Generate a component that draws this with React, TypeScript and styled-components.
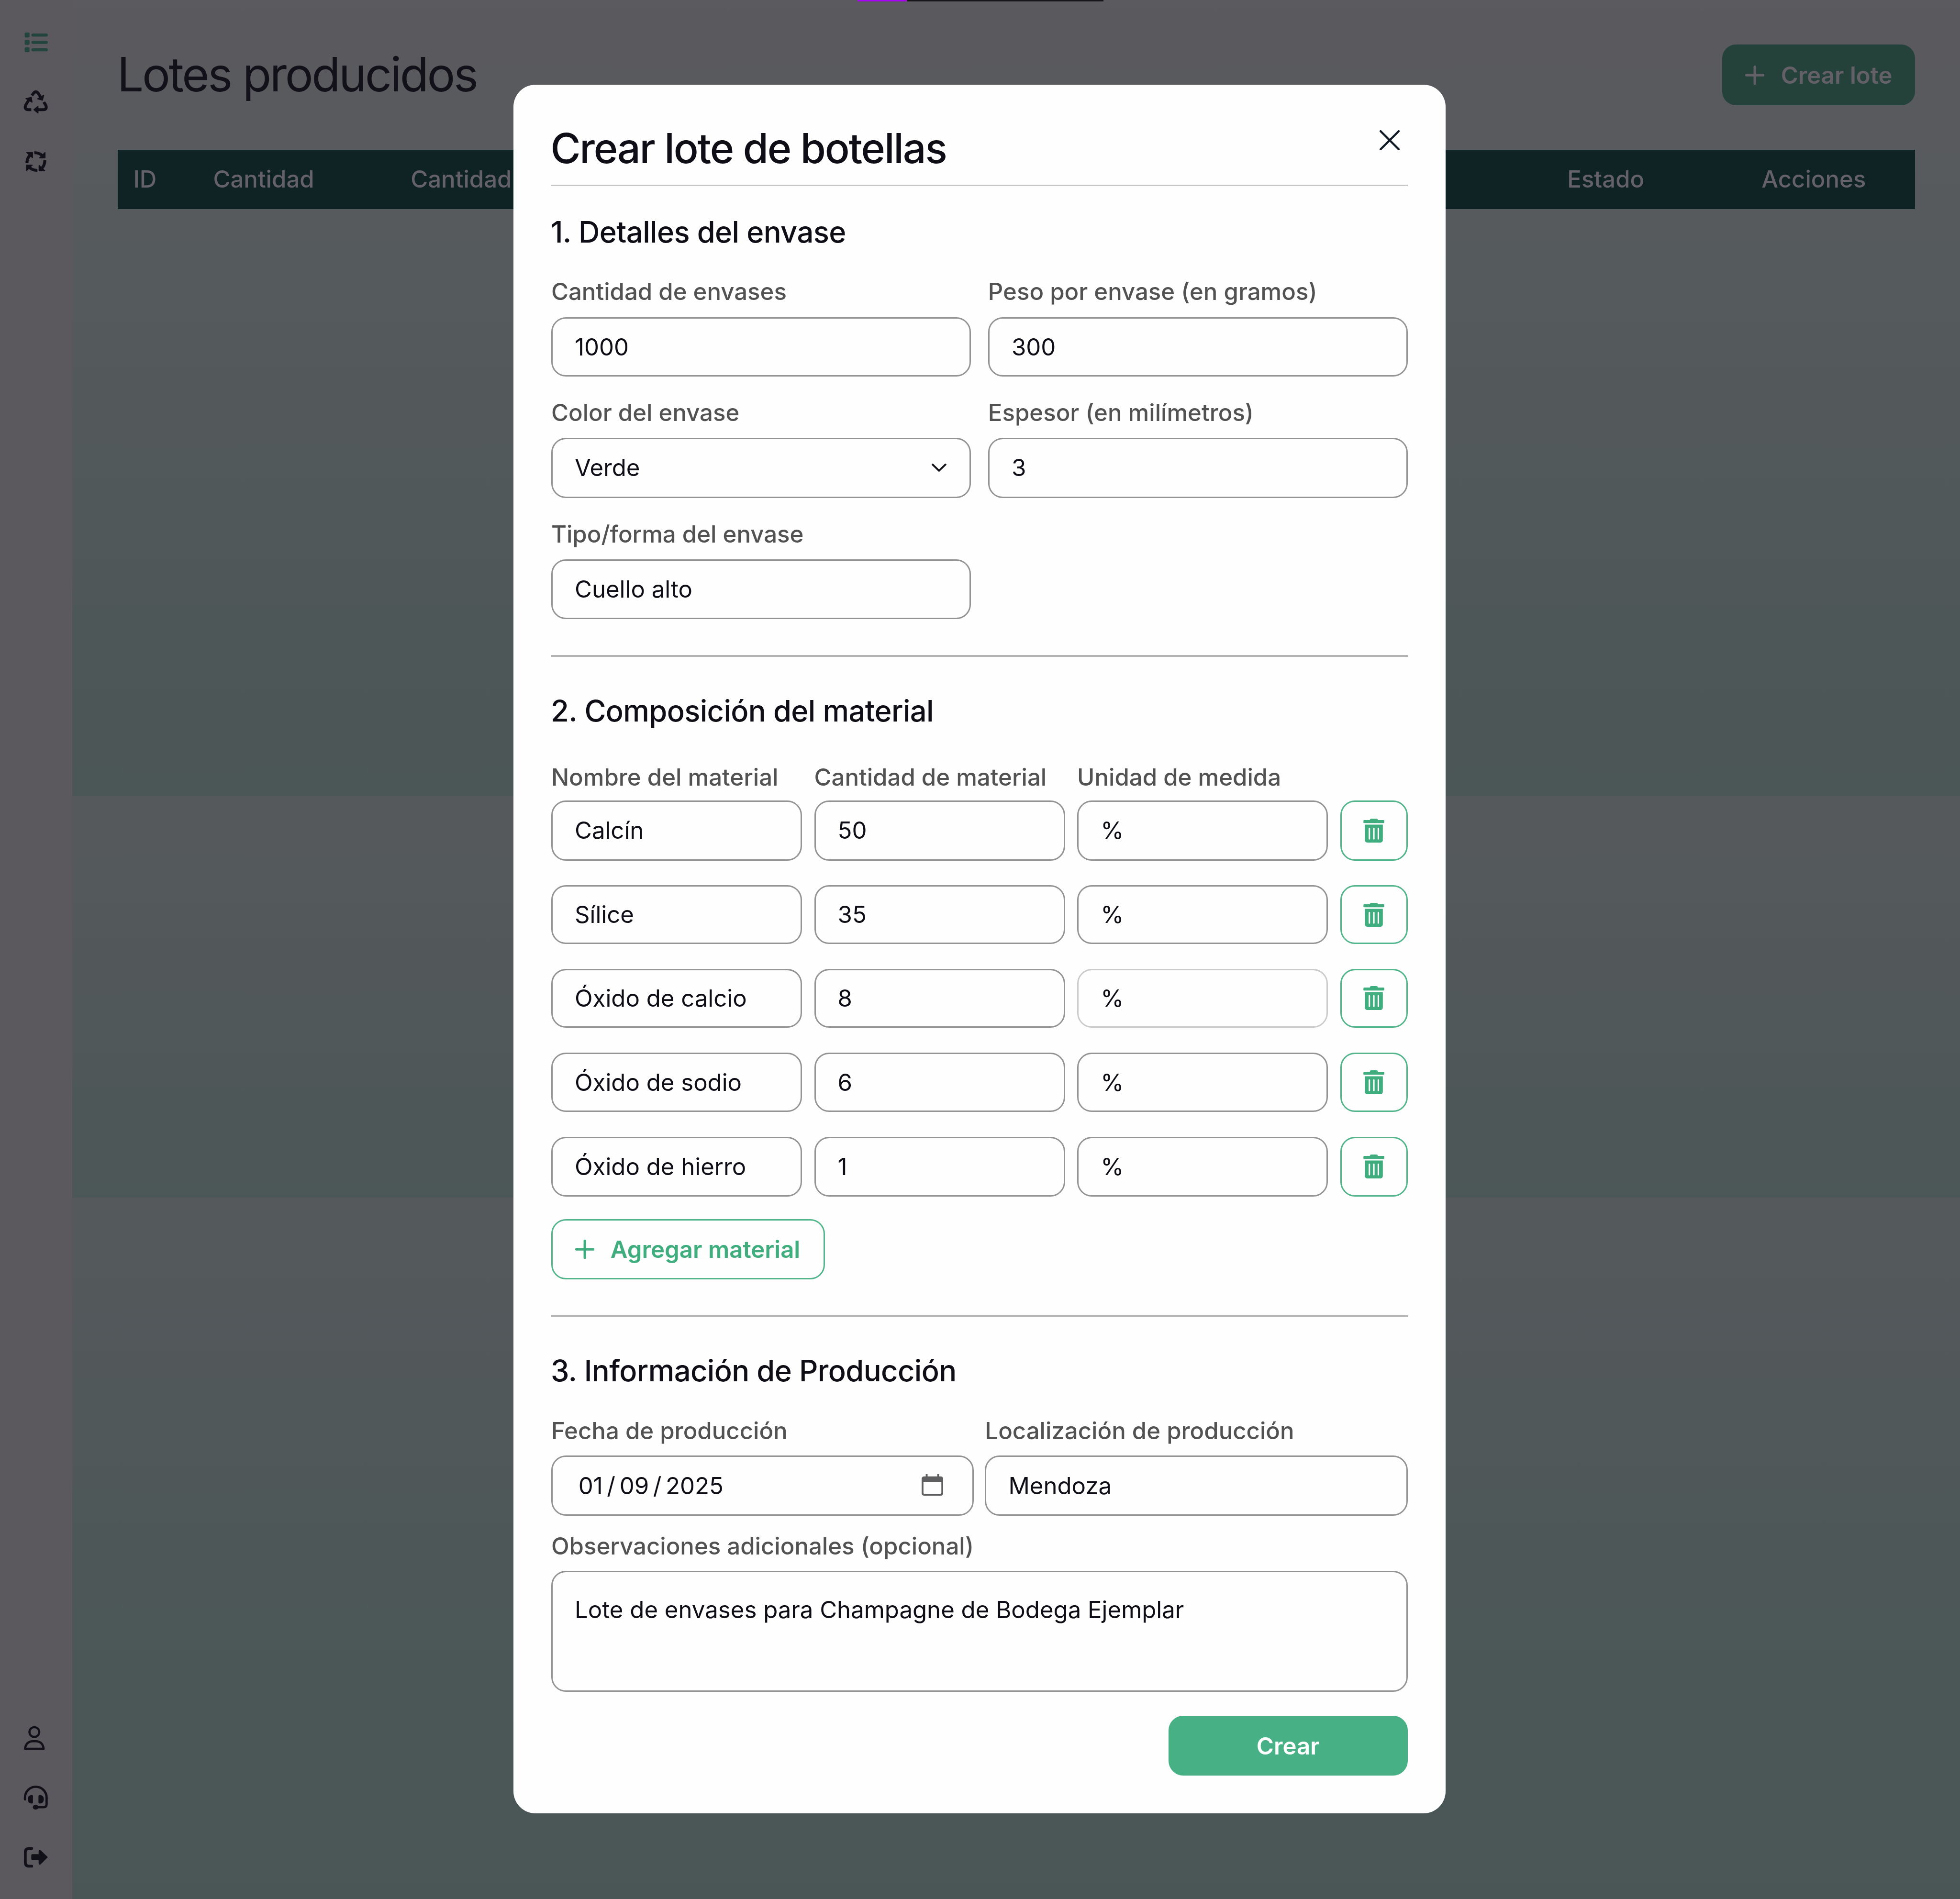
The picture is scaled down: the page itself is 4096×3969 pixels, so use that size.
import React from 'react';
import styled, { createGlobalStyle } from 'styled-components';
import { FaTrashAlt } from 'react-icons/fa';

// Design units are converted to page pixels.
const SCALE = 0.95993;
const u = (n: number) => `${+(n * SCALE).toFixed(2)}px`;

const GREEN = '#52b58c';
const INK = '#121019';

const GlobalStyle = createGlobalStyle`
  * { box-sizing: border-box; }
  html, body { margin: 0; padding: 0; overflow: hidden; }
  body { font-family: Inter, 'Liberation Sans', sans-serif; color: #0f0e17; }
`;

const Page = styled.div`
  position: relative;
  display: flex;
  width: 4096px;
  height: 3969px;
  overflow: hidden;
  background:
    linear-gradient(180deg, #5b5a5e 0%, #555a5c 35%, #4b5656 100%) 0 0 / 100% 1664px no-repeat,
    linear-gradient(180deg, #56595c 0%, #4c5757 100%) 0 1664px / 100% 839px no-repeat,
    linear-gradient(180deg, #55595c 0%, #4b5757 70%, #4a5655 100%) 0 2503px / 100% 1466px no-repeat;
`;

const Sidebar = styled.nav`
  display: flex;
  flex-direction: column;
  justify-content: space-between;
  flex: none;
  width: ${u(157.3)};
  padding: ${u(27.5)} 0 ${u(26)};
  background: #5b595e;
`;

const NavGroup = styled.div`
  display: flex;
  flex-direction: column;
`;

const NavItem = styled.div<{ $active?: boolean }>`
  display: flex;
  align-items: center;
  justify-content: center;
  height: ${u(129.8)};
  color: ${(p) => (p.$active ? '#24453b' : INK)};
  svg {
    width: ${u(53.33)};
    height: ${u(53.33)};
    overflow: visible;
  }
`;

const Main = styled.main`
  flex: 1;
  min-width: 0;
  padding: ${u(97)} ${u(98)} 0 ${u(98.7)};
`;

const TopBar = styled.header`
  display: flex;
  align-items: center;
  justify-content: space-between;
  height: ${u(132)};
`;

const PageTitle = styled.h1`
  margin: 0 0 0 ${u(-1)};
  font-size: ${u(102.4)};
  font-weight: 400;
  letter-spacing: ${u(-3.55)};
  line-height: ${u(132)};
  color: ${INK};
`;

const CreateLot = styled.div`
  display: flex;
  align-items: center;
  gap: ${u(36)};
  width: ${u(420)};
  height: ${u(132)};
  padding: ${u(1)} 0 0 ${u(50)};
  border-radius: ${u(30)};
  background: #24423a;
  color: #636067;
  font-size: ${u(51.2)};
  font-weight: 600;
  white-space: nowrap;
`;

const TableHead = styled.div`
  display: grid;
  grid-template-columns: ${u(174)} ${u(430)} ${u(2518)} ${u(423)} 1fr;
  align-items: center;
  height: ${u(128.5)};
  margin-top: ${u(97.5)};
  padding-bottom: ${u(2)};
  background: #0f2224;
  color: #646268;
  font-size: ${u(51.2)};
  font-weight: 500;
`;

const HeadCell = styled.span`
  padding-left: ${u(34)};
  white-space: nowrap;
`;

const ProgressBar = styled.div`
  position: absolute;
  top: 0;
  left: ${u(1866.5)};
  display: flex;
  width: ${u(535.5)};
  height: ${u(3)};
  background: #171519;
`;

const ProgressFill = styled.div`
  width: 20%;
  background: #a805f5;
`;

const Overlay = styled.div`
  position: absolute;
  inset: 0;
  display: flex;
  align-items: flex-start;
  justify-content: center;
  padding: ${u(184)} ${u(2.4)} 0 0;
`;

const Modal = styled.section`
  display: flex;
  flex-direction: column;
  width: ${u(2029.6)};
  height: ${u(3764)};
  padding: ${u(83)} ${u(82.5)} 0;
  border-radius: ${u(48)};
  background: #fefefe;
`;

const ModalHeader = styled.header`
  display: flex;
  align-items: flex-start;
  justify-content: space-between;
  flex: none;
  height: ${u(138)};
  border-bottom: ${u(3.2)} solid #c6c6c6;
`;

const ModalTitle = styled.h2`
  margin: 0 0 0 ${u(-1.5)};
  font-size: ${u(89.6)};
  font-weight: 500;
  letter-spacing: ${u(-2.3)};
  line-height: ${u(113)};
`;

const CloseIcon = styled.svg`
  width: ${u(44)};
  height: ${u(44)};
  margin: ${u(16.4)} ${u(17)} 0 0;
  color: #101b26;
`;

const SectionTitle = styled.h3<{ $top: number }>`
  flex: none;
  margin: ${(p) => u(p.$top)} 0 0 ${u(-1)};
  font-size: ${u(64)};
  font-weight: 500;
  letter-spacing: ${u(-0.62)};
  line-height: ${u(80)};
`;

const Divider = styled.div`
  flex: none;
  height: ${u(4)};
  margin-top: ${u(78)};
  background: #b3b3b3;
`;

const FieldGrid = styled.div<{ $top: number; $gap: number }>`
  display: grid;
  grid-template-columns: 1fr 1fr;
  column-gap: ${(p) => u(p.$gap)};
  flex: none;
  margin-top: ${(p) => u(p.$top)};
`;

const Field = styled.div<{ $gap?: number }>`
  display: flex;
  flex-direction: column;
  gap: ${(p) => u(p.$gap ?? 24)};
`;

const Label = styled.div`
  font-size: ${u(51.2)};
  font-weight: 500;
  line-height: ${u(60)};
  color: #525252;
  white-space: nowrap;
`;

const Box = styled.div<{ $height?: number; $muted?: boolean }>`
  display: flex;
  align-items: center;
  justify-content: space-between;
  height: ${(p) => u(p.$height ?? 131)};
  padding: ${u(1)} ${u(48)} 0;
  border: ${u(3.2)} solid ${(p) => (p.$muted ? '#cbcbcb' : '#949494')};
  border-radius: ${u(32)};
  font-size: ${u(51.2)};
  line-height: ${u(60)};
  white-space: nowrap;
`;

const Chevron = styled.svg`
  width: ${u(32)};
  height: ${u(18)};
  margin-right: ${u(2)};
`;

const MaterialGrid = styled.div<{ $top: number }>`
  display: grid;
  grid-template-columns: repeat(3, ${u(546)}) ${u(147)};
  justify-content: space-between;
  flex: none;
  margin-top: ${(p) => u(p.$top)};
`;

const TrashButton = styled.div`
  display: flex;
  align-items: center;
  justify-content: center;
  border: ${u(3.2)} solid ${GREEN};
  border-radius: ${u(32)};
  color: #3fad7e;
  svg {
    width: ${u(46)};
    height: ${u(52)};
  }
`;

const AddButton = styled.div`
  display: flex;
  align-items: center;
  flex: none;
  gap: ${u(35)};
  width: ${u(595.5)};
  height: ${u(131)};
  margin-top: ${u(49)};
  padding-left: ${u(49)};
  border: ${u(3.2)} solid ${GREEN};
  border-radius: ${u(32)};
  color: #3fad7e;
  font-size: ${u(51.2)};
  font-weight: 600;
  white-space: nowrap;
`;

const PlusSvg = styled.svg`
  flex: none;
  width: ${u(42)};
  height: ${u(42)};
`;

const DateValue = styled.span`
  display: flex;
  gap: ${u(9)};
  padding-left: ${u(8)};
`;

const CalendarSvg = styled.svg`
  width: ${u(47)};
  height: ${u(47)};
  margin: ${u(-4)} ${u(16)} 0 0;
`;

const Notes = styled.div`
  height: ${u(263)};
  padding: ${u(52)} ${u(48)};
  border: ${u(3.2)} solid #949494;
  border-radius: ${u(32)};
  font-size: ${u(51.2)};
  line-height: ${u(60)};
`;

const NotesField = styled.div`
  display: flex;
  flex-direction: column;
  flex: none;
  gap: ${u(23.3)};
  margin-top: ${u(36.5)};
`;

const Submit = styled.div`
  display: flex;
  align-items: center;
  justify-content: center;
  align-self: flex-end;
  flex: none;
  width: ${u(521)};
  height: ${u(129.5)};
  margin-top: ${u(53)};
  padding-top: ${u(1)};
  border-radius: ${u(32)};
  background: #47b085;
  color: #fff;
  font-size: ${u(51.2)};
  font-weight: 600;
`;

const Plus = () => (
  <PlusSvg viewBox="0 0 42 42" fill="none" stroke="currentColor" strokeWidth="5.4" strokeLinecap="round">
    <path d="M21 2.6V39.4M2.6 21H39.4" />
  </PlusSvg>
);

const ListIcon = () => (
  <svg viewBox="66 76 160 160" fill="currentColor">
    {[92, 140, 188].map((y) => (
      <React.Fragment key={y}>
        <rect x="71" y={y} width="32" height="32" rx="9" />
        <rect x="115" y={y + 6} width="107" height="20" rx="10" />
      </React.Fragment>
    ))}
  </svg>
);

const RecycleIcon = () => (
  <svg viewBox="66 468 160 160" fill="none" stroke="currentColor" strokeWidth="19" strokeLinejoin="round">
    <path d="M118 504L130 488Q144 472 158 488L176 516" />
    <path d="M114 597H92Q66 594 78 566L99 532" />
    <path d="M196 547L210 570Q218 597 192 597H155" />
    <g fill="currentColor" strokeWidth="6">
      <path d="M195 503L187 535L155 526Z" />
      <path d="M79 525L114 516L119 548Z" />
      <path d="M131 597L158 575V619Z" />
    </g>
  </svg>
);

const CycleIcon = () => (
  <svg viewBox="66 855 160 160" fill="none" stroke="currentColor" strokeWidth="19" strokeLinejoin="round">
    <path d="M86 945Q85 916 106 893" />
    <path d="M134 878Q164 876 188 898" />
    <path d="M202 927Q204 958 182 980" />
    <path d="M154 992Q124 994 100 972" />
    <g fill="currentColor" strokeWidth="6">
      <path d="M84 876H122V910Z" />
      <path d="M204 876V911H168Z" />
      <path d="M165 960V996H203Z" />
      <path d="M83 959H120L83 994Z" />
    </g>
  </svg>
);

const UserIcon = () => (
  <svg viewBox="156 173 160 160" fill="none" stroke="currentColor" strokeWidth="14" strokeLinejoin="round">
    <circle cx="224" cy="214" r="32" />
    <path d="M163 323Q170 275 214 274H234Q278 275 285 323Z" />
  </svg>
);

const HeadsetIcon = () => (
  <svg viewBox="156 562 160 160" fill="none" stroke="currentColor" strokeWidth="15" strokeLinecap="round">
    <path d="M163 652V640A70 70 0 0 1 304 640V684Q304 703 285 703H240" />
    <g fill="currentColor" stroke="none">
      <path d="M207 624H205Q181 626 181 651T205 679H207Q215 679 215 671V632Q215 624 207 624Z" />
      <path d="M259 624H262Q286 626 286 651T262 679H259Q251 679 251 671V632Q251 624 259 624Z" />
      <rect x="214" y="688" width="37" height="30" rx="15" />
    </g>
  </svg>
);

const ExitIcon = () => (
  <svg viewBox="156 952 160 160" fill="none" stroke="currentColor" strokeWidth="18" strokeLinecap="round">
    <path d="M207 975H190Q165 975 165 1000V1066Q165 1091 190 1091H207" />
    <path
      d="M204 1022Q204 1012 213 1012H252V993Q253 980 265 986L312 1032L265 1079Q253 1084 252 1072V1052H213Q204 1052 204 1042Z"
      fill="currentColor"
      stroke="none"
    />
  </svg>
);

const materials = [
  { name: 'Calcín', amount: '50', height: 131 },
  { name: 'Sílice', amount: '35', height: 128.5 },
  { name: 'Óxido de calcio', amount: '8', height: 129, muted: true },
  { name: 'Óxido de sodio', amount: '6', height: 130 },
  { name: 'Óxido de hierro', amount: '1', height: 130.5 },
];

export default function App() {
  return (
    <Page>
      <GlobalStyle />
      <Sidebar>
        <NavGroup>
          <NavItem $active><ListIcon /></NavItem>
          <NavItem><RecycleIcon /></NavItem>
          <NavItem><CycleIcon /></NavItem>
        </NavGroup>
        <NavGroup>
          <NavItem><UserIcon /></NavItem>
          <NavItem><HeadsetIcon /></NavItem>
          <NavItem><ExitIcon /></NavItem>
        </NavGroup>
      </Sidebar>
      <Main>
        <TopBar>
          <PageTitle>Lotes producidos</PageTitle>
          <CreateLot><Plus />Crear lote</CreateLot>
        </TopBar>
        <TableHead>
          <HeadCell>ID</HeadCell>
          <HeadCell>Cantidad</HeadCell>
          <HeadCell>Cantidad</HeadCell>
          <HeadCell>Estado</HeadCell>
          <HeadCell>Acciones</HeadCell>
        </TableHead>
      </Main>
      <ProgressBar><ProgressFill /></ProgressBar>
      <Overlay>
        <Modal>
          <ModalHeader>
            <ModalTitle>Crear lote de botellas</ModalTitle>
            <CloseIcon viewBox="0 0 44 44" fill="none" stroke="currentColor" strokeWidth="4.6" strokeLinecap="round">
              <path d="M2.3 2.3L41.7 41.7M41.7 2.3L2.3 41.7" />
            </CloseIcon>
          </ModalHeader>

          <SectionTitle $top={61}>1. Detalles del envase</SectionTitle>
          <FieldGrid $top={59} $gap={37.5}>
            <Field $gap={26}>
              <Label>Cantidad de envases</Label>
              <Box $height={129}>1000</Box>
            </Field>
            <Field $gap={26}>
              <Label>Peso por envase (en gramos)</Label>
              <Box $height={129}>300</Box>
            </Field>
          </FieldGrid>
          <FieldGrid $top={49} $gap={37.5}>
            <Field>
              <Label>Color del envase</Label>
              <Box>
                Verde
                <Chevron viewBox="0 0 32 18" fill="none" stroke="currentColor" strokeWidth="4" strokeLinecap="round" strokeLinejoin="round">
                  <path d="M2 2L16 15.5L30 2" />
                </Chevron>
              </Box>
            </Field>
            <Field>
              <Label>Espesor (en milímetros)</Label>
              <Box>3</Box>
            </Field>
          </FieldGrid>
          <FieldGrid $top={49.5} $gap={37.5}>
            <Field>
              <Label>Tipo/forma del envase</Label>
              <Box>Cuello alto</Box>
            </Field>
          </FieldGrid>
          <Divider />

          <SectionTitle $top={77.8}>2. Composición del material</SectionTitle>
          <MaterialGrid $top={74.2}>
            <Label>Nombre del material</Label>
            <Label>Cantidad de material</Label>
            <Label>Unidad de medida</Label>
          </MaterialGrid>
          {materials.map((m, i) => (
            <MaterialGrid key={m.name} $top={i === 0 ? 20.4 : 53.4}>
              <Box $height={m.height}>{m.name}</Box>
              <Box $height={m.height}>{m.amount}</Box>
              <Box $height={m.height} $muted={m.muted}>%</Box>
              <TrashButton><FaTrashAlt /></TrashButton>
            </MaterialGrid>
          ))}
          <AddButton><Plus />Agregar material</AddButton>
          <Divider />

          <SectionTitle $top={77.3}>3. Información de Producción</SectionTitle>
          <FieldGrid $top={60.8} $gap={24}>
            <Field>
              <Label>Fecha de producción</Label>
              <Box>
                <DateValue>
                  <span>01</span><span>/</span><span>09</span><span>/</span><span>2025</span>
                </DateValue>
                <CalendarSvg viewBox="0 0 47 47" fill="#5f5f61">
                  <path d="M9 0H13V5H34V0H38V5H41Q47 5 47 11V41Q47 47 41 47H6Q0 47 0 41V11Q0 5 6 5H9ZM4 17V40Q4 43 7 43H40Q43 43 43 40V17Z" fillRule="evenodd" />
                </CalendarSvg>
              </Box>
            </Field>
            <Field>
              <Label>Localización de producción</Label>
              <Box>Mendoza</Box>
            </Field>
          </FieldGrid>
          <NotesField>
            <Label>Observaciones adicionales (opcional)</Label>
            <Notes>Lote de envases para Champagne de Bodega Ejemplar</Notes>
          </NotesField>
          <Submit>Crear</Submit>
        </Modal>
      </Overlay>
    </Page>
  );
}
